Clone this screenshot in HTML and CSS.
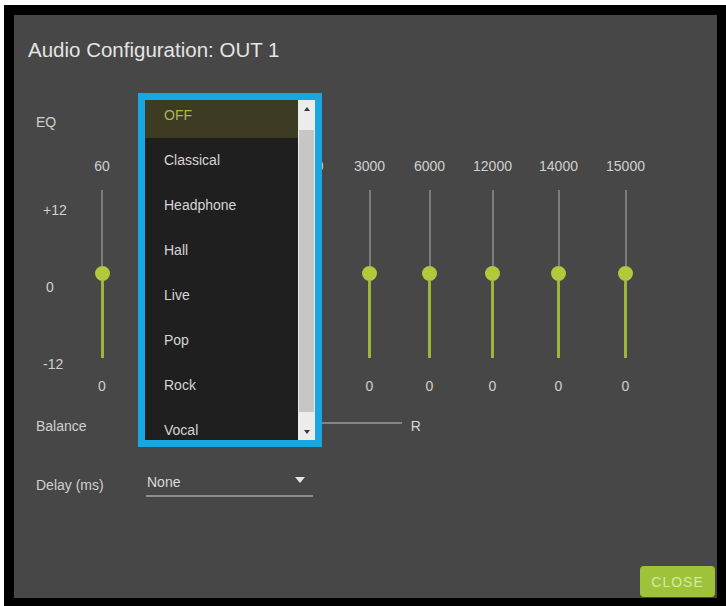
FILE: index.html
```html
<!DOCTYPE html>
<html>
<head>
<meta charset="utf-8">
<link rel="stylesheet" href="styles.css">
</head>
<body>
<div class="frame">
  <div class="panel">
    <h1 class="title">Audio Configuration: OUT 1</h1>
    <div class="eq-label">EQ</div>
    <div class="eq-body">
      <div class="scale">
        <span class="scale-plus">+12</span>
        <span class="scale-zero">0</span>
        <span class="scale-minus">-12</span>
      </div>
      <div class="bands">
        <div class="band"><span class="freq">60</span><div class="slider"><i class="track-up"></i><i class="knob"></i><i class="track-down"></i></div><span class="gain">0</span></div>
        <div class="band covered"><span class="freq">150</span><div class="slider"><i class="track-up"></i><i class="knob"></i><i class="track-down"></i></div><span class="gain">0</span></div>
        <div class="band covered"><span class="freq">400</span><div class="slider"><i class="track-up"></i><i class="knob"></i><i class="track-down"></i></div><span class="gain">0</span></div>
        <div class="band covered-partly"><span class="freq">1000</span><div class="slider"><i class="track-up"></i><i class="knob"></i><i class="track-down"></i></div><span class="gain">0</span></div>
        <div class="band"><span class="freq">3000</span><div class="slider"><i class="track-up"></i><i class="knob"></i><i class="track-down"></i></div><span class="gain">0</span></div>
        <div class="band"><span class="freq">6000</span><div class="slider"><i class="track-up"></i><i class="knob"></i><i class="track-down"></i></div><span class="gain">0</span></div>
        <div class="band"><span class="freq">12000</span><div class="slider"><i class="track-up"></i><i class="knob"></i><i class="track-down"></i></div><span class="gain">0</span></div>
        <div class="band"><span class="freq">14000</span><div class="slider"><i class="track-up"></i><i class="knob"></i><i class="track-down"></i></div><span class="gain">0</span></div>
        <div class="band"><span class="freq">15000</span><div class="slider"><i class="track-up"></i><i class="knob"></i><i class="track-down"></i></div><span class="gain">0</span></div>
      </div>
    </div>
    <div class="row balance-row">
      <span class="row-label">Balance</span>
      <span class="side side-l">L</span>
      <span class="balance-line"></span>
      <span class="side">R</span>
    </div>
    <div class="row delay-row">
      <span class="row-label delay-label">Delay (ms)</span>
      <div class="select"><span>None</span><i class="caret"></i></div>
    </div>
    <div class="footer"><button class="close">CLOSE</button></div>

    <div class="dropdown">
      <div class="list">
        <ul>
          <li class="selected">OFF</li>
          <li>Classical</li>
          <li>Headphone</li>
          <li>Hall</li>
          <li>Live</li>
          <li>Pop</li>
          <li>Rock</li>
          <li>Vocal</li>
        </ul>
      </div>
      <div class="scrollbar">
        <div class="sb-btn"><i class="arrow-up"></i></div>
        <div class="sb-thumb"></div>
        <div class="sb-btn sb-down"><i class="arrow-down"></i></div>
      </div>
    </div>
  </div>
</div>
</body>
</html>
```

FILE: styles.css
```css
* { box-sizing: border-box; }
html, body { margin: 0; padding: 0; background: #ffffff; }
body { font-family: "Liberation Sans", Arial, sans-serif; }

.frame {
  margin: 5px 0 0 4px;
  width: 722px;
  height: 601px;
  background: #000;
  padding: 10px 9px 8px 10px;
}

.panel {
  position: relative;
  height: 100%;
  background: #474747;
  padding: 23px 0 0 14px;
  display: flex;
  flex-direction: column;
  color: #d0d0d0;
  font-size: 14px;
}

.title {
  margin: 0;
  font-weight: normal;
  font-size: 20.5px;
  line-height: 24px;
  color: #e4e4e4;
}

.eq-label {
  margin: 52px 0 0 8px;
  line-height: 16px;
}

.eq-body {
  margin-top: 28px;
  display: flex;
  padding-left: 15px;
}

.scale {
  width: 29px;
  display: flex;
  flex-direction: column;
  line-height: 16px;
}
.scale-plus { margin-top: 44px; }
.scale-zero { margin-top: 61px; padding-left: 3px; }
.scale-minus { margin-top: 61px; }

.bands {
  display: grid;
  grid-template-columns: 60px 72px 72px 64px 59px 61px 65px 67px 67px;
}

.band {
  display: flex;
  flex-direction: column;
  align-items: center;
  line-height: 16px;
}
/* columns lying under the open list */
.band.covered .freq,
.band.covered .gain,
.band.covered-partly .gain { visibility: hidden; }

.slider {
  margin-top: 16px;
  width: 15px;
  height: 168px;
  display: flex;
  flex-direction: column;
  align-items: center;
}
.track-up { display: block; width: 2px; height: 76px; background: #7d7d7d; }
.knob { display: block; width: 15px; height: 15px; border-radius: 50%; background: #b2c93c; flex: none; }
.track-down { display: block; width: 3px; flex: 1; background: #9db43e; }

.gain { margin-top: 20px; }

.row {
  display: flex;
  line-height: 16px;
  padding-left: 8px;
}
.row-label { width: 110px; flex: none; }

.balance-row { margin-top: 24px; align-items: center; }
.side { color: #d8d8d8; }
.side-l { visibility: hidden; }
.balance-line {
  width: 242px;
  height: 2px;
  margin: 0 9px 6px 6px;
  background: #858585;
}

.delay-row { margin-top: 40px; align-items: flex-start; }
.delay-label { margin-top: 3px; }
.select {
  width: 167px;
  display: flex;
  justify-content: space-between;
  align-items: center;
  padding: 0 8px 5px 1px;
  border-bottom: 2px solid #8e8e8e;
  color: #dcdcdc;
}
.caret {
  display: block;
  width: 0;
  height: 0;
  border-left: 5px solid transparent;
  border-right: 5px solid transparent;
  border-top: 6px solid #e6e6e6;
  margin-bottom: 4px;
}

.footer {
  margin-top: auto;
  display: flex;
  justify-content: flex-end;
  padding: 0 2px 1px 0;
}
.close {
  width: 75px;
  height: 31px;
  border: none;
  border-radius: 4px;
  background: #9ec33b;
  color: #d6e9a2;
  font-family: "Liberation Sans", Arial, sans-serif;
  font-size: 14px;
  letter-spacing: 1px;
  padding: 0;
}

/* open dropdown overlay */
.dropdown {
  position: absolute;
  left: 124px;
  top: 78px;
  width: 184px;
  height: 354px;
  border: 7px solid #1aa6e2;
  display: flex;
  background: #1f1f1f;
}
.list {
  flex: 1;
  overflow: hidden;
  background: #1f1f1f;
}
.list ul {
  list-style: none;
  margin: -7px 0 0 0;
  padding: 0;
}
.list li {
  height: 45px;
  line-height: 45px;
  padding-left: 19px;
  color: #d6d6d6;
}
.list li.selected {
  background: #3d3c23;
  color: #a9b94f;
}

.scrollbar {
  width: 17px;
  flex: none;
  background: #ececec;
  display: flex;
  flex-direction: column;
}
.sb-btn {
  height: 17px;
  flex: none;
  display: flex;
  align-items: center;
  justify-content: center;
}
.sb-down { margin-top: auto; }
.arrow-up {
  display: block;
  width: 0; height: 0;
  border-left: 3px solid transparent;
  border-right: 3px solid transparent;
  border-bottom: 4px solid #3a3a3a;
}
.arrow-down {
  display: block;
  width: 0; height: 0;
  border-left: 3px solid transparent;
  border-right: 3px solid transparent;
  border-top: 4px solid #3a3a3a;
}
.sb-thumb {
  margin: 13px 1px 0 1px;
  height: 282px;
  background: #c6c6c6;
}
```
